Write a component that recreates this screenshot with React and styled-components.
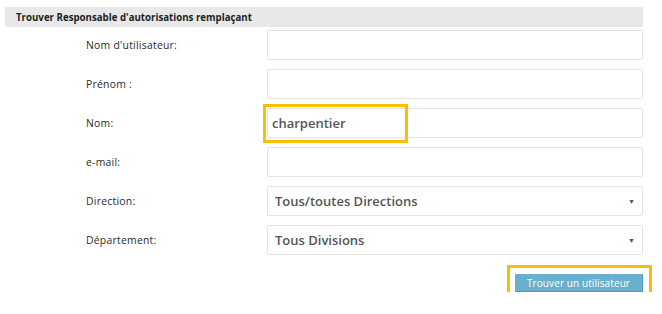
import React from 'react';
import styled, { createGlobalStyle } from 'styled-components';

const GlobalStyle = createGlobalStyle`
  body {
    margin: 0;
    background: #fff;
    font-family: "Open Sans", "Liberation Sans", sans-serif;
  }
`;

const Panel = styled.div`
  width: 638px;
  margin: 7px 0 0 5px;
`;

const Header = styled.div`
  height: 20px;
  background: #e8e8e8;
  padding-left: 11px;
  display: flex;
  align-items: center;
  font-size: 9.7px;
  font-weight: 700;
  color: #1e1e1e;
`;

const Form = styled.div`
  display: grid;
  grid-template-columns: 181px 1fr;
  row-gap: 9px;
  padding: 3px 0 0 81px;
`;

const Label = styled.label`
  display: flex;
  align-items: center;
  font-size: 10.4px;
  letter-spacing: 0.25px;
  color: #2a2a2a;
`;

const Field = styled.div`
  position: relative;
  height: 30px;
  box-sizing: border-box;
  border: 1px solid #e4e4e4;
  border-radius: 2px;
  background: #fff;
  display: flex;
  align-items: center;
  padding: 0 ${props => (props.select ? '7px' : '4px')};
  font-size: 13px;
  font-weight: 600;
  color: #555;
`;

const Arrow = styled.span`
  margin-left: auto;
  font-size: 7px;
  color: #555;
`;

const Highlight = styled.div`
  position: absolute;
  box-sizing: border-box;
  border: 3px solid #fbbf00;
  pointer-events: none;
`;

const Actions = styled.div`
  display: flex;
  justify-content: flex-end;
  padding-top: 19px;
`;

const ButtonWrap = styled.div`
  position: relative;
`;

const Button = styled.button`
  display: block;
  height: 18px;
  width: 128px;
  padding: 0;
  border: 0;
  border-radius: 1px;
  border-bottom: 1px solid #4f97b6;
  border-right: 1px solid #4f97b6;
  background: #69b0cc;
  color: #fff;
  font-family: "Open Sans", "Liberation Sans", sans-serif;
  font-size: 10px;
  letter-spacing: 0.1px;
`;

const rows = [
  { label: "Nom d'utilisateur:" },
  { label: 'Prénom :' },
  { label: 'Nom:', value: 'charpentier', marked: true },
  { label: 'e-mail:' },
  { label: 'Direction:', value: 'Tous/toutes Directions', select: true },
  { label: 'Département:', value: 'Tous Divisions', select: true },
];

export default function App() {
  return (
    <>
      <GlobalStyle />
      <Panel>
        <Header>Trouver Responsable d'autorisations remplaçant</Header>
        <Form>
          {rows.map(row => (
            <React.Fragment key={row.label}>
              <Label>{row.label}</Label>
              <Field select={row.select}>
                {row.value}
                {row.select && <Arrow>▼</Arrow>}
                {row.marked && (
                  <Highlight style={{ left: -5, top: -5, width: 145, height: 39 }} />
                )}
              </Field>
            </React.Fragment>
          ))}
        </Form>
        <Actions>
          <ButtonWrap>
            <Button>Trouver un utilisateur</Button>
            <Highlight style={{ left: -8, top: -9, width: 145, height: 40 }} />
          </ButtonWrap>
        </Actions>
      </Panel>
    </>
  );
}
